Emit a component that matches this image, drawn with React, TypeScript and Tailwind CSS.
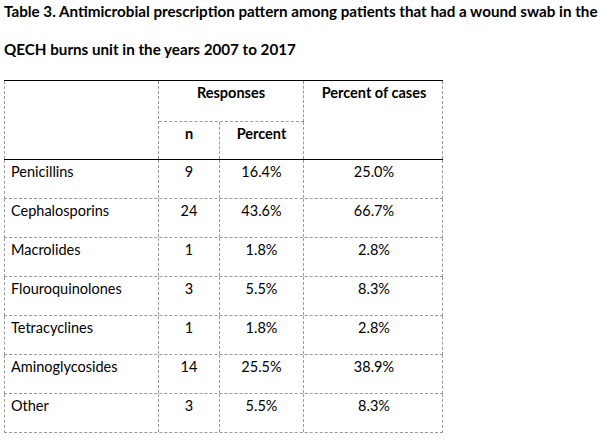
import React from "react";

const rows = [
  ["Penicillins", "9", "16.4%", "25.0%"],
  ["Cephalosporins", "24", "43.6%", "66.7%"],
  ["Macrolides", "1", "1.8%", "2.8%"],
  ["Flouroquinolones", "3", "5.5%", "8.3%"],
  ["Tetracyclines", "1", "1.8%", "2.8%"],
  ["Aminoglycosides", "14", "25.5%", "38.9%"],
  ["Other", "3", "5.5%", "8.3%"],
];

export default function App() {
  return (
    <div className="w-[601px] h-[441px] bg-white text-black overflow-hidden" style={{ fontFamily: "Lato, 'Liberation Sans', sans-serif" }}>
      <div className="pl-[4px] pt-[2px] text-[15.2px] font-bold whitespace-nowrap">
        <div className="h-[19px] leading-[19px]">Table 3. Antimicrobial prescription pattern among patients that had a wound swab in the</div>
        <div className="mt-[19px] h-[19px] leading-[19px]">QECH burns unit in the years 2007 to 2017</div>
      </div>
      <div className="ml-[4px] mt-[21px] w-[439px] text-[14.5px] leading-[18px]">
        <div className="h-px bg-black" />
        <div className="grid grid-cols-[154px_61px_84px_140px] grid-rows-[41px_37px] border-x border-dashed border-[#9a9a9a] font-bold">
          <div className="row-span-2 border-r border-dashed border-[#9a9a9a]" />
          <div className="col-span-2 border-r border-b border-dashed border-[#9a9a9a] pt-[3px] text-center">Responses</div>
          <div className="row-span-2 pt-[3px] text-center">Percent of cases</div>
          <div className="border-r border-dashed border-[#9a9a9a] pt-[3px] text-center">n</div>
          <div className="border-r border-dashed border-[#9a9a9a] pt-[3px] text-center">Percent</div>
        </div>
        <div className="h-px bg-black" />
        {rows.map((r) => (
          <div key={r[0]} className="grid grid-cols-[154px_61px_84px_140px] h-[39px] border-x border-b border-dashed border-[#9a9a9a]">
            <div className="border-r border-dashed border-[#9a9a9a] pt-[3px] pl-[6px] whitespace-nowrap">{r[0]}</div>
            <div className="border-r border-dashed border-[#9a9a9a] pt-[3px] text-center">{r[1]}</div>
            <div className="border-r border-dashed border-[#9a9a9a] pt-[3px] text-center">{r[2]}</div>
            <div className="pt-[3px] text-center">{r[3]}</div>
          </div>
        ))}
      </div>
    </div>
  );
}
